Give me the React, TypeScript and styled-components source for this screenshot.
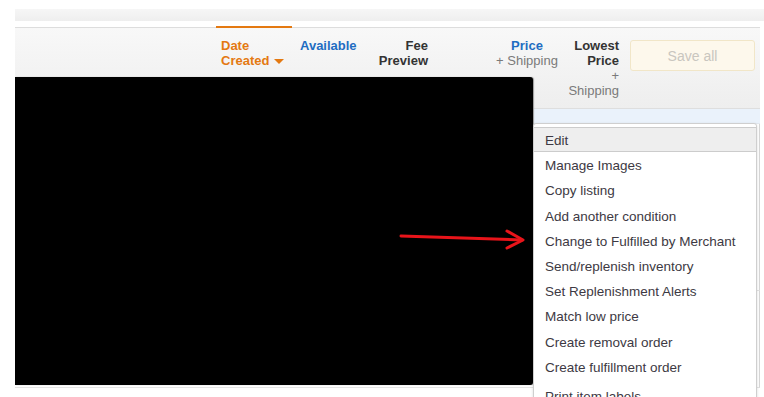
import React from 'react';
import styled, { createGlobalStyle } from 'styled-components';

const GlobalStyle = createGlobalStyle`
  html, body {
    margin: 0;
    padding: 0;
    background: #ffffff;
    overflow: hidden;
  }
  body {
    font-family: Arial, 'Liberation Sans', Helvetica, sans-serif;
  }
`;

const Page = styled.div`
  position: relative;
  width: 764px;
  height: 397px;
  padding: 9px 0 0 15px;
  box-sizing: border-box;
  overflow: hidden;
`;

const TopStrip = styled.div`
  height: 12px;
  background: linear-gradient(#f6f6f6, #eeeeee);
`;

const Table = styled.div`
  margin-top: 6px;
  width: 745px;
  border-top: 1px solid #dddddd;
`;

const HeaderRow = styled.div`
  display: grid;
  grid-template-columns: 201px 76px 73px 70px 127px 63px 135px;
  height: 80px;
  background: linear-gradient(#f8f8f8, #eeeeee);
  border-bottom: 1px solid #dedede;
  font-size: 13px;
  line-height: 15px;
`;

const HeadCell = styled.div<{ $align?: 'left' | 'right' | 'center'; $active?: boolean; $padL?: number; $padR?: number }>`
  position: relative;
  padding: 10px ${(p) => p.$padR ?? 0}px 0 ${(p) => p.$padL ?? 0}px;
  text-align: ${(p) => p.$align ?? 'left'};
  margin-top: ${(p) => (p.$active ? '-2px' : '0')};
  border-top: ${(p) => (p.$active ? '2px solid #e47911' : 'none')};
`;

const HeadLabel = styled.div<{ $tone?: 'orange' | 'blue' | 'dark' | 'muted' }>`
  font-weight: ${(p) => (p.$tone === 'muted' ? 'normal' : 'bold')};
  color: ${(p) =>
    p.$tone === 'orange' ? '#e47911' : p.$tone === 'blue' ? '#1f6dc2' : p.$tone === 'muted' ? '#7a7a7a' : '#333333'};
`;

const Caret = styled.span`
  display: inline-block;
  margin-left: 5px;
  vertical-align: middle;
  border-left: 5px solid transparent;
  border-right: 5px solid transparent;
  border-top: 5px solid #e47911;
`;

const SaveButton = styled.button`
  margin: 12px 0 0 5px;
  width: 125px;
  height: 31px;
  background: #fdf8ec;
  border: 1px solid #f1e6c8;
  border-radius: 3px;
  color: #c9c6bf;
  font-family: Arial, 'Liberation Sans', sans-serif;
  font-size: 14px;
`;

const FilterRow = styled.div`
  height: 14px;
  background: #eaf2fb;
  border-bottom: 1px solid #e2e8ef;
`;

const BodyRow = styled.div<{ $h: number }>`
  height: ${(p) => p.$h}px;
  border-bottom: 1px solid #e4e4e4;
  border-right: 1px solid #d6d6d6;
`;

const Redaction = styled.div`
  position: absolute;
  left: 15px;
  top: 77px;
  width: 518px;
  height: 308px;
  background: #000000;
  border-radius: 0 3px 3px 0;
  box-shadow: 1px 0 1px #999999;
`;

const Arrow = styled.svg`
  position: absolute;
  left: 398px;
  top: 226px;
`;

const Menu = styled.div`
  position: absolute;
  left: 533px;
  top: 123px;
  width: 222px;
  padding-top: 3px;
  background: #ffffff;
  border: 1px solid #cfcfcf;
  border-radius: 3px;
  box-shadow: 0 1px 3px rgba(0, 0, 0, 0.15);
`;

const MenuItem = styled.div<{ $active?: boolean; $gap?: boolean }>`
  height: 25.2px;
  line-height: 25px;
  margin-top: ${(p) => (p.$gap ? '4px' : '0')};
  padding-left: 11px;
  box-sizing: border-box;
  font-size: 13.5px;
  color: #3d3943;
  white-space: nowrap;
  background: ${(p) => (p.$active ? '#eeeeee' : 'transparent')};
  border-top: 1px solid ${(p) => (p.$active ? '#cccccc' : 'transparent')};
  border-bottom: 1px solid ${(p) => (p.$active ? '#cccccc' : 'transparent')};
`;

const menuItems = [
  'Edit',
  'Manage Images',
  'Copy listing',
  'Add another condition',
  'Change to Fulfilled by Merchant',
  'Send/replenish inventory',
  'Set Replenishment Alerts',
  'Match low price',
  'Create removal order',
  'Create fulfillment order',
  'Print item labels',
];

export default function App() {
  return (
    <Page>
      <GlobalStyle />
      <TopStrip />
      <Table>
        <HeaderRow>
          <HeadCell />
          <HeadCell $active $padL={5}>
            <HeadLabel $tone="orange">Date</HeadLabel>
            <HeadLabel $tone="orange">
              Created
              <Caret />
            </HeadLabel>
          </HeadCell>
          <HeadCell $padL={8}>
            <HeadLabel $tone="blue">Available</HeadLabel>
          </HeadCell>
          <HeadCell $align="right" $padR={7}>
            <HeadLabel $tone="dark">Fee</HeadLabel>
            <HeadLabel $tone="dark">Preview</HeadLabel>
          </HeadCell>
          <HeadCell $align="center" $padL={57}>
            <HeadLabel $tone="blue">Price</HeadLabel>
            <HeadLabel $tone="muted">+ Shipping</HeadLabel>
          </HeadCell>
          <HeadCell $align="right" $padR={6}>
            <HeadLabel $tone="dark">Lowest</HeadLabel>
            <HeadLabel $tone="dark">Price</HeadLabel>
            <HeadLabel $tone="muted">+</HeadLabel>
            <HeadLabel $tone="muted">Shipping</HeadLabel>
          </HeadCell>
          <div>
            <SaveButton>Save all</SaveButton>
          </div>
        </HeaderRow>
        <FilterRow />
        <BodyRow $h={166} />
        <BodyRow $h={96} />
      </Table>
      <Redaction />
      <Arrow width="132" height="26" viewBox="0 0 132 26">
        <path d="M3 10 L124 14" stroke="#e8141a" strokeWidth="3" fill="none" strokeLinecap="round" />
        <path d="M109 5 L125 14 L109 22" stroke="#e8141a" strokeWidth="3" fill="none" strokeLinecap="round" strokeLinejoin="round" />
      </Arrow>
      <Menu>
        {menuItems.map((item, i) => (
          <MenuItem key={item} $active={i === 0} $gap={i === menuItems.length - 1}>
            {item}
          </MenuItem>
        ))}
      </Menu>
    </Page>
  );
}
